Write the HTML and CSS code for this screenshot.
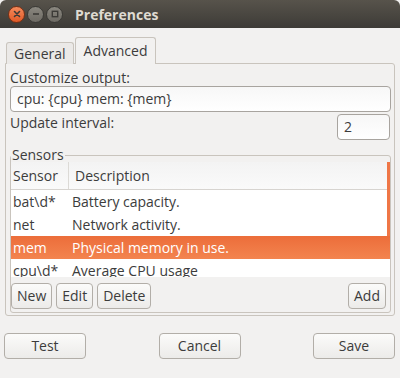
FILE: index.html
```html
<!DOCTYPE html>
<html lang="en">
<head>
    <meta charset="UTF-8">
    <title>Preferences</title>
    <link rel="stylesheet" href="styles.css">
</head>
<body>
    <div class="window">
        <div class="titlebar">
            <div class="controls">
                <span class="ctl close">
                    <svg viewBox="0 0 8 8" width="8" height="8"><path d="M1.5 1.5 L6.5 6.5 M6.5 1.5 L1.5 6.5" stroke="#3c3b37" stroke-width="1.6" stroke-linecap="round"/></svg>
                </span>
                <span class="ctl">
                    <svg viewBox="0 0 8 8" width="8" height="8"><path d="M1 4 H7" stroke="#3c3b37" stroke-width="1.6"/></svg>
                </span>
                <span class="ctl">
                    <svg viewBox="0 0 8 8" width="8" height="8"><rect x="1.3" y="1.3" width="5.4" height="5.4" fill="none" stroke="#3c3b37" stroke-width="1.4"/></svg>
                </span>
            </div>
            <span class="title">Preferences</span>
        </div>

        <div class="content">
            <div class="tabs">
                <div class="tab">General</div>
                <div class="tab active">Advanced</div>
            </div>
            <div class="page">
                <label class="lbl">Customize output:</label>
                <div class="entry wide">cpu: {cpu} mem: {mem}</div>
                <div class="interval-row">
                    <label class="lbl small">Update interval:</label>
                    <div class="entry spin">2</div>
                </div>

                <fieldset class="frame">
                    <legend>Sensors</legend>
                    <div class="tree">
                        <div class="row head">
                            <div class="c1">Sensor</div>
                            <div class="c2">Description</div>
                        </div>
                        <div class="row">
                            <div class="c1">bat\d*</div>
                            <div class="c2">Battery capacity.</div>
                        </div>
                        <div class="row">
                            <div class="c1">net</div>
                            <div class="c2">Network activity.</div>
                        </div>
                        <div class="row selected">
                            <div class="c1">mem</div>
                            <div class="c2">Physical memory in use.</div>
                        </div>
                        <div class="row">
                            <div class="c1">cpu\d*</div>
                            <div class="c2">Average CPU usage</div>
                        </div>
                        <div class="scrollbar"></div>
                    </div>
                    <div class="tree-buttons">
                        <button class="btn">New</button>
                        <button class="btn">Edit</button>
                        <button class="btn">Delete</button>
                        <span class="spacer"></span>
                        <button class="btn">Add</button>
                    </div>
                </fieldset>
            </div>

            <div class="actions">
                <button class="btn big">Test</button>
                <button class="btn big">Cancel</button>
                <button class="btn big">Save</button>
            </div>
        </div>
    </div>
</body>
</html>
```

FILE: styles.css
```css
html, body {
    margin: 0;
    padding: 0;
}
body {
    width: 400px;
    height: 378px;
    overflow: hidden;
    font-family: 'Open Sans', 'DejaVu Sans', sans-serif;
    font-size: 14px;
    color: #3c3c3c;
    background: #f2f1f0;
}
.window {
    width: 400px;
    height: 378px;
    display: flex;
    flex-direction: column;
}
.titlebar {
    height: 28px;
    flex: none;
    background: linear-gradient(#57534b, #3d3b37);
    border-radius: 6px 6px 0 0;
    display: flex;
    align-items: center;
    padding-left: 8px;
    box-sizing: border-box;
}
.controls {
    display: flex;
    gap: 2px;
}
.ctl {
    width: 17px;
    height: 17px;
    border-radius: 50%;
    background: linear-gradient(#8a877f, #6d6a63);
    border: 1px solid #3a3935;
    box-sizing: border-box;
    display: flex;
    align-items: center;
    justify-content: center;
}
.ctl.close {
    background: linear-gradient(#f48a5c, #e05a27);
    border-color: #7a3014;
}
.title {
    margin-left: 12px;
    color: #dfdbd2;
    font-weight: bold;
    font-size: 14px;
}
.content {
    padding: 9px 5px 0 5px;
    display: flex;
    flex-direction: column;
}
.tabs {
    display: flex;
    align-items: flex-end;
    height: 27px;
    padding-left: 1px;
    position: relative;
    z-index: 1;
}
.tab {
    height: 21px;
    padding: 0 7px;
    line-height: 21px;
    border: 1px solid #c9c4bd;
    border-bottom: none;
    border-radius: 3px 3px 0 0;
    background: #ebe9e7;
    margin-right: 1px;
}
.tab.active {
    height: 26px;
    line-height: 25px;
    background: #f2f1f0;
    padding: 0 8px;
}
.page {
    border: 1px solid #c9c4bd;
    border-radius: 0 3px 3px 3px;
    margin-top: -1px;
    padding: 3px 3px 2px 4px;
    display: flex;
    flex-direction: column;
}
.lbl {
    line-height: 21px;
}
.lbl.small {
    line-height: 17px;
}
.entry {
    background: linear-gradient(#f7f7f7, #ffffff);
    border: 1px solid #a8a49f;
    border-radius: 4px;
    box-sizing: border-box;
    height: 26px;
    line-height: 24px;
    padding: 0 6px;
}
.entry.wide {
    margin-top: -2px;
}
.interval-row {
    display: flex;
    justify-content: space-between;
    align-items: flex-start;
    margin-top: 2px;
}
.spin {
    width: 53px;
    margin-right: 1px;
}
.frame {
    margin: 8px 0 0 0;
    padding: 0 0 3px 0;
    border: 1px solid #c9c4bd;
    border-radius: 3px;
}
.frame legend {
    padding: 0 1px;
    margin-left: 0;
    line-height: 14px;
}
.tree {
    height: 115px;
    background: #fff;
    overflow: hidden;
    position: relative;
}
.row {
    display: flex;
    height: 23px;
    line-height: 23px;
    white-space: nowrap;
}
.row.head {
    height: 27px;
    line-height: 27px;
    background: linear-gradient(#f3f3f3, #fafafa);
    border-bottom: 1px solid #d7d4d0;
}
.c1 {
    width: 55px;
    padding-left: 2px;
}
.row.head .c1 {
    border-right: 1px solid #dcdad6;
}
.c2 {
    padding-left: 4px;
}
.row.head .c2 {
    padding-left: 6px;
}
.row.selected {
    background: linear-gradient(#ec6d3a, #f3844f);
    color: #fff;
    position: relative;
    z-index: 1;
}
.scrollbar {
    position: absolute;
    top: 0;
    right: 0;
    width: 3px;
    height: 80px;
    background: #ef7646;
}
.tree-buttons {
    display: flex;
    gap: 4px;
    margin-top: 6px;
    padding: 0 4px 0 0;
}
.spacer {
    flex: 1;
}
.btn {
    font-family: inherit;
    font-size: 14px;
    color: #3c3c3c;
    height: 26px;
    padding: 0 5px;
    border: 1px solid #b2aea8;
    border-radius: 4px;
    background: linear-gradient(#fbfbfa, #ecebe9);
    box-sizing: border-box;
    line-height: 24px;
}
.actions {
    display: flex;
    justify-content: space-between;
    margin: 17px 0 0 -1px;
}
.btn.big {
    width: 82px;
}
```
